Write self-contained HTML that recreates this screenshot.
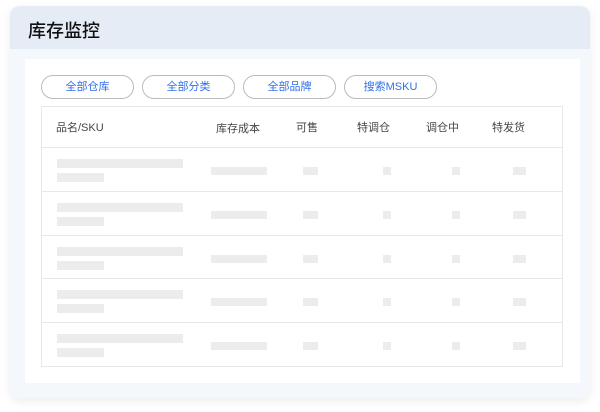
<!DOCTYPE html>
<html><head><meta charset="utf-8"><style>
*{margin:0;padding:0;box-sizing:border-box}
body{width:600px;height:412px;background:#fff;font-family:"Liberation Sans","Noto Sans CJK SC",sans-serif;position:relative;overflow:hidden}
.card{position:absolute;left:10px;top:6px;width:580px;height:392px;border-radius:10px;background:#f4f7fc;box-shadow:0 3px 10px rgba(0,0,0,.08);overflow:hidden}
.hd{height:43px;background:#e6ecf5;font-size:18px;color:#111;padding-left:18px;line-height:50px;font-weight:500}
.panel{position:absolute;left:15px;top:53px;width:555px;height:324px;background:#fff}
.btn{position:absolute;top:75px;height:24px;width:93px;border:1px solid #bbb;border-radius:12px;font-size:11px;color:#2f6fe8;text-align:center;line-height:22px}
.tbl{position:absolute;left:41px;top:106px;width:522px;height:261px;border:1px solid #e8e8e8}
.th{position:absolute;top:119px;font-size:11px;color:#444}
.row{position:absolute;left:42px;width:520px;border-top:1px solid #e8e8e8;height:44px}
.s{position:absolute;background:#ececec}
</style></head><body>
<div class="card"><div class="hd">库存监控</div><div class="panel"></div></div>
<div class="btn" style="left:41px">全部仓库</div>
<div class="btn" style="left:142px">全部分类</div>
<div class="btn" style="left:243px">全部品牌</div>
<div class="btn" style="left:344px">搜索MSKU</div>
<div class="tbl"></div>
<div class="th" style="left:56px">品名/SKU</div>
<div class="th" style="left:216px;top:120px">库存成本</div>
<div class="th" style="left:296px">可售</div>
<div class="th" style="left:357px">特调仓</div>
<div class="th" style="left:426px">调仓中</div>
<div class="th" style="left:492px">特发货</div>
<div class="row" style="top:147px"></div>
<div class="row" style="top:191px"></div>
<div class="row" style="top:235px"></div>
<div class="row" style="top:278px"></div>
<div class="row" style="top:322px"></div>
<div id="sk"></div>
<script>
var ys=[159,203,247,290,334],h='';
ys.forEach(function(y){
h+='<div class="s" style="left:57px;top:'+y+'px;width:126px;height:9px"></div>';
h+='<div class="s" style="left:57px;top:'+(y+14)+'px;width:47px;height:9px"></div>';
var y2=y+8;
h+='<div class="s" style="left:211px;top:'+y2+'px;width:56px;height:8px"></div>';
h+='<div class="s" style="left:303px;top:'+y2+'px;width:15px;height:8px"></div>';
h+='<div class="s" style="left:383px;top:'+y2+'px;width:8px;height:8px"></div>';
h+='<div class="s" style="left:452px;top:'+y2+'px;width:8px;height:8px"></div>';
h+='<div class="s" style="left:513px;top:'+y2+'px;width:13px;height:8px"></div>';
});
document.getElementById('sk').innerHTML=h;
</script>
</body></html>
